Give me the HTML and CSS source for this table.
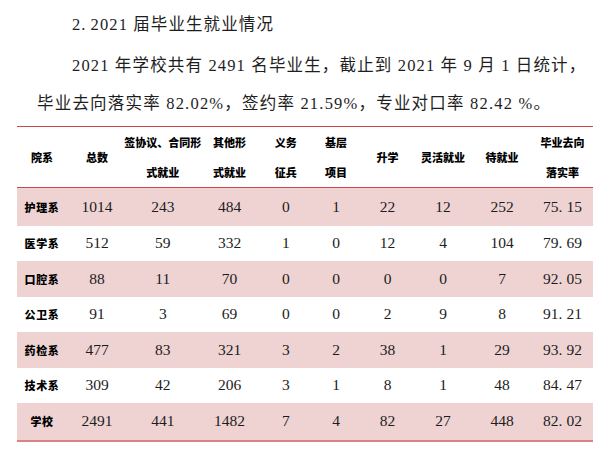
FILE: index.html
```html
<!DOCTYPE html>
<html lang="zh-CN">
<head>
<meta charset="utf-8">
<link rel="stylesheet" href="styles.css">
</head>
<body>
<div class="doc">
  <div class="line l1">2<span class="d">.</span>2021 届毕业生就业情况</div>
  <div class="line l2">2021 年学校共有 2491 名毕业生，截止到 2021 年 9 月 1 日统计，</div>
  <div class="line l3">毕业去向落实率 82.02%，签约率 21.59%，专业对口率 82.42 %。</div>
  <table class="grid">
    <colgroup>
      <col class="c1"><col class="c2"><col class="c3"><col class="c4"><col class="c5">
      <col class="c6"><col class="c7"><col class="c8"><col class="c9"><col class="c10">
    </colgroup>
    <thead>
      <tr>
        <th>院系</th>
        <th>总数</th>
        <th><span class="wide">签协议、合同形<br>式就业</span></th>
        <th>其他形<br>式就业</th>
        <th>义务<br>征兵</th>
        <th>基层<br>项目</th>
        <th>升学</th>
        <th>灵活就业</th>
        <th>待就业</th>
        <th>毕业去向<br>落实率</th>
      </tr>
    </thead>
    <tbody>
      <tr class="band r1"><th>护理系</th><td>1014</td><td>243</td><td>484</td><td>0</td><td>1</td><td>22</td><td>12</td><td>252</td><td>75<span class="d">.</span>15</td></tr>
      <tr class="r2"><th>医学系</th><td>512</td><td>59</td><td>332</td><td>1</td><td>0</td><td>12</td><td>4</td><td>104</td><td>79<span class="d">.</span>69</td></tr>
      <tr class="band r3"><th>口腔系</th><td>88</td><td>11</td><td>70</td><td>0</td><td>0</td><td>0</td><td>0</td><td>7</td><td>92<span class="d">.</span>05</td></tr>
      <tr class="r4"><th>公卫系</th><td>91</td><td>3</td><td>69</td><td>0</td><td>0</td><td>2</td><td>9</td><td>8</td><td>91<span class="d">.</span>21</td></tr>
      <tr class="band r5"><th>药检系</th><td>477</td><td>83</td><td>321</td><td>3</td><td>2</td><td>38</td><td>1</td><td>29</td><td>93<span class="d">.</span>92</td></tr>
      <tr class="r6"><th>技术系</th><td>309</td><td>42</td><td>206</td><td>3</td><td>1</td><td>8</td><td>1</td><td>48</td><td>84<span class="d">.</span>47</td></tr>
      <tr class="band r7"><th>学校</th><td>2491</td><td>441</td><td>1482</td><td>7</td><td>4</td><td>82</td><td>27</td><td>448</td><td>82<span class="d">.</span>02</td></tr>
    </tbody>
  </table>
</div>
</body>
</html>
```

FILE: styles.css
```css
html, body {
  margin: 0;
  padding: 0;
  background: #ffffff;
}

.doc {
  width: 611px;
  height: 461px;
  overflow: hidden;
  padding-top: 4px;
  box-sizing: border-box;
  font-family: "Liberation Serif", "Noto Sans CJK SC", serif;
  color: #1e1e1e;
}

.line {
  font-size: 16.5px;
  white-space: nowrap;
}

.l1 {
  height: 42px;
  line-height: 42px;
  padding-left: 72px;
  letter-spacing: 1.1px;
}

.l2 {
  height: 40px;
  line-height: 40px;
  padding-left: 72px;
  letter-spacing: 1.15px;
}

.l3 {
  height: 36px;
  line-height: 36px;
  padding-left: 37px;
  letter-spacing: 1.2px;
}

.grid {
  margin-top: 4px;
  margin-left: 17px;
  width: 576px;
  table-layout: fixed;
  border-collapse: collapse;
  border-top: 1.5px solid #c9484a;
  border-bottom: 2px solid #d68583;
}

.c1 { width: 50px; }
.c2 { width: 60px; }
.c3 { width: 71.5px; }
.c4 { width: 62px; }
.c5 { width: 50.5px; }
.c6 { width: 50px; }
.c7 { width: 53px; }
.c8 { width: 58px; }
.c9 { width: 60px; }
.c10 { width: 61px; }

.grid thead th {
  height: 60px;
  padding: 0;
  font-family: "Noto Sans CJK SC", sans-serif;
  font-weight: 900;
  font-size: 11px;
  line-height: 30px;
  color: #000;
  text-align: center;
  vertical-align: middle;
  white-space: nowrap;
  border-bottom: 1px solid #c9484a;
}

.wide {
  display: block;
  margin: 0 -8px;
}

.grid tbody th {
  padding: 0;
  font-family: "Noto Sans CJK SC", sans-serif;
  font-weight: 900;
  font-size: 11px;
  letter-spacing: 0.6px;
  color: #000;
  text-align: center;
  vertical-align: middle;
  white-space: nowrap;
}

.grid td {
  padding: 0;
  font-family: "Liberation Serif", serif;
  font-size: 15.5px;
  color: #1c1c1c;
  text-align: center;
  vertical-align: middle;
  white-space: nowrap;
}

.d {
  margin-right: 4px;
}

.band {
  background: #efd3d3;
}

.r1 { height: 38px; }
.r2 { height: 35px; }
.r3 { height: 36px; }
.r4 { height: 35px; }
.r5 { height: 36px; }
.r6 { height: 35px; }
.r7 { height: 38px; }
```
